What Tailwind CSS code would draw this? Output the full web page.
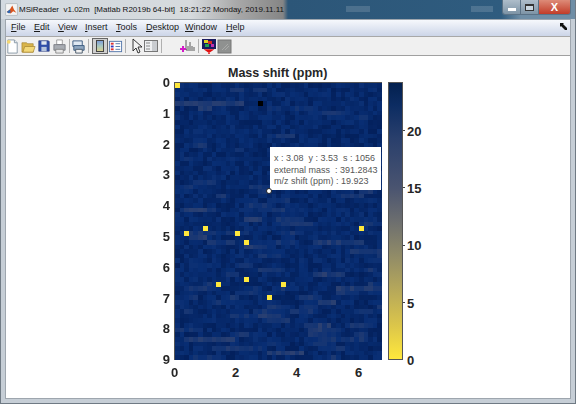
<!DOCTYPE html>
<html lang="en">
<head>
  <meta charset="UTF-8">
  <title>MSiReader</title>
  <script src="https://cdn.jsdelivr.net/npm/@tailwindcss/browser@4"></script>
</head>
<body class="w-[576px] h-[404px] overflow-hidden bg-[#c6ced6]">
  <div class="flex flex-col h-full border border-t-0 border-[#6f7a84]">
    <!-- title bar -->
    <div class="relative h-[19px] shrink-0 flex items-center bg-[linear-gradient(to_right,#d3dae1_0,#d6dadd_190px,#a9a9a9_235px,#858585_282px,#2c5678_287px,#2f5c7f_500px,#6f8ea6_520px)] font-['Liberation_Sans',sans-serif] text-[8px] text-[#111]">
      <svg class="ml-[4px] w-[13px] h-[13px]" viewBox="0 0 16 16">
        <rect x="1" y="1" width="14" height="14" fill="#f4f4f4" stroke="#9aa0a6" stroke-width=".6"/>
        <path d="M2 11l4-3 3-5 2 5 3 4-4-2-3 3z" fill="#d9541e"/>
        <path d="M2 11l4-3 1 3-2 2z" fill="#2b66b3"/>
      </svg>
      <span class="ml-[1px] whitespace-pre">MSiReader  v1.02m  [Matlab R2019b 64-bit]  18:21:22 Monday, 2019.11.11</span>
      <div class="absolute right-[4px] top-0 flex h-[15px] rounded-b-[3px] overflow-hidden border border-t-0 border-[#5b7286]">
        <div class="w-[18px] flex items-end justify-center pb-[3px] bg-[linear-gradient(to_bottom,#aebdca,#7d94a6)] border-r border-[#5b7286]"><div class="w-[8px] h-[3px] bg-white"></div></div>
        <div class="w-[18px] flex items-center justify-center bg-[linear-gradient(to_bottom,#aebdca,#7d94a6)] border-r border-[#5b7286]"><div class="w-[9px] h-[7px] border border-[#333] border-t-2 bg-[#c9d6e0]"></div></div>
        <div class="w-[31px] flex items-center justify-center bg-[linear-gradient(to_bottom,#dd8b78,#c23c28)] text-white font-bold text-[11px] leading-none">X</div>
      </div>
      <div class="absolute left-[345px] top-[6px] w-[24px] h-[6px] bg-white/15"></div>
      <div class="absolute left-[470px] top-[6px] w-[22px] h-[6px] bg-white/15"></div>
    </div>

    <!-- client area -->
    <div class="flex-1 min-h-0 mx-[4px] mb-[4px] flex flex-col border border-[#9ea6ae] bg-white">
      <!-- menu bar -->
      <div class="relative h-[17px] shrink-0 flex items-center pl-[5px] bg-[linear-gradient(to_bottom,#f6f8fc,#ccd5e8)] border-b border-[#a8a8a8] font-['Liberation_Sans',sans-serif] text-[9px] text-[#1a1a1a]">
        <span class="w-[23px]"><span class="underline">F</span>ile</span>
        <span class="w-[24px]"><span class="underline">E</span>dit</span>
        <span class="w-[27px]"><span class="underline">V</span>iew</span>
        <span class="w-[31px]"><span class="underline">I</span>nsert</span>
        <span class="w-[30px]"><span class="underline">T</span>ools</span>
        <span class="w-[39px]"><span class="underline">D</span>esktop</span>
        <span class="w-[41px]"><span class="underline">W</span>indow</span>
        <span><span class="underline">H</span>elp</span>
        <svg class="absolute right-[3px] top-[3px] w-[7px] h-[7px]" viewBox="0 0 7 7"><path d="M0 0h4l-1 1 4 4v2H5L1 3 0 4z" fill="#111"/></svg>
      </div>

      <!-- toolbar -->
      <div class="h-[19px] shrink-0 flex items-center bg-[#f0f0f0] border-b border-[#a0a0a0]">
        <svg class="ml-[-1px] w-[15px] h-[15px]" viewBox="0 0 16 16"><path d="M3 1h7l3 3v11H3z" fill="#fff" stroke="#8a9aa8"/><path d="M10 1v3h3" fill="#e8eef4" stroke="#8a9aa8"/><circle cx="4" cy="3" r="2" fill="#f5d76e"/></svg>
        <svg class="ml-[1px] w-[15px] h-[15px]" viewBox="0 0 16 16"><path d="M1 4h5l1 1h6v9H1z" fill="#d9b44a" stroke="#a08030" stroke-width=".7"/><path d="M2 14l2-6h11l-2 6z" fill="#f3d878" stroke="#a08030" stroke-width=".7"/></svg>
        <svg class="ml-[1px] w-[14px] h-[14px]" viewBox="0 0 16 16"><path d="M2 2h11l1 1v11H2z" fill="#2f4da8" stroke="#1d2f70" stroke-width=".7"/><rect x="5" y="2.500" width="6" height="4" fill="#dfe6f0"/><rect x="5" y="9" width="6" height="5" fill="#b6c4dc"/></svg>
        <svg class="ml-[1px] w-[15px] h-[15px]" viewBox="0 0 16 16"><path d="M5 1h6v5H5z" fill="#fff" stroke="#888" stroke-width=".8"/><path d="M2 6h12v6H2z" fill="#a9adb3" stroke="#6b6f75" stroke-width=".8"/><path d="M4 11h8v4H4z" fill="#e8e8e8" stroke="#777" stroke-width=".8"/></svg>
        <div class="ml-[2px] w-px h-[14px] bg-[#b0b0b0]"></div>
        <svg class="ml-[1px] w-[15px] h-[15px]" viewBox="0 0 16 16"><path d="M2 2h10v6H2z" fill="#dfe8f2" stroke="#3d5c80"/><path d="M3 7h11v5H3z" fill="#8ea6c0" stroke="#3d5c80"/><path d="M5 11h7v4H5z" fill="#f2f2f2" stroke="#4a5a6a"/></svg>
        <div class="ml-[2px] w-px h-[14px] bg-[#b0b0b0]"></div>
        <div class="ml-[3px] w-[16px] h-[16px] flex items-center justify-center bg-[#d0d0d0] border border-[#666]">
          <div class="w-[8px] h-[12px] border border-[#444] bg-[linear-gradient(to_bottom,#7f9fd8,#a8c8c0,#d8d090)]"></div>
        </div>
        <svg class="w-[15px] h-[15px]" viewBox="0 0 16 16"><rect x="1.500" y="2.500" width="13" height="11" fill="#fff" stroke="#5577aa"/><rect x="3" y="4" width="3" height="2" fill="#d33"/><rect x="3" y="7" width="3" height="2" fill="#33b"/><rect x="3" y="10" width="3" height="2" fill="#d33"/><path d="M8 5h5M8 8h5M8 11h5" stroke="#5577aa"/></svg>
        <div class="ml-[2px] w-px h-[14px] bg-[#b0b0b0]"></div>
        <svg class="ml-[3px] w-4 h-4" viewBox="0 0 16 16"><path d="M4 1v12l3-3 2 5 2-1-2-5h4z" fill="#f4f4f4" stroke="#222" stroke-width=".9"/></svg>
        <svg class="ml-[-2px] w-4 h-4" viewBox="0 0 16 16"><rect x="1.500" y="2.500" width="13" height="11" fill="#eef0f2" stroke="#777"/><rect x="9" y="3" width="5" height="10" fill="#c9ccd0"/><path d="M3 5h4M3 8h4M3 11h4" stroke="#888"/></svg>
        <div class="ml-[2px] w-px h-[14px] bg-[#b0b0b0]"></div>
        <svg class="ml-[18px] w-4 h-4" viewBox="0 0 16 16"><path d="M6 2v10h9" fill="none" stroke="#333" stroke-width=".8"/><path d="M8 11V8M10 11V4M12 11V8M14 11V9" stroke="#333" stroke-width=".8"/><path d="M0 11h6M3 8v6" stroke="#d319c8" stroke-width="2"/></svg>
        <div class="ml-[2px] w-px h-[14px] bg-[#b0b0b0]"></div>
        <svg class="ml-[2px] w-4 h-4" viewBox="0 0 16 16"><rect x="1" y="1" width="14" height="10" fill="#1b1b60"/><rect x="3" y="2" width="4" height="3" fill="#e0d020"/><rect x="7" y="3" width="4" height="3" fill="#d82a20"/><rect x="4" y="6" width="4" height="3" fill="#20a050"/><rect x="10" y="6" width="3" height="3" fill="#c030b0"/><path d="M8 16v-4M5 12h6l-3 2z" stroke="#e01010" stroke-width="1.500" fill="#e01010"/></svg>
        <svg class="w-4 h-4" viewBox="0 0 16 16"><rect x="1" y="2" width="13" height="13" fill="#8f9190" stroke="#777"/><path d="M5 12l6-6M8 12l4-4" stroke="#a9aaa9"/></svg>
      </div>

      <!-- figure -->
      <div class="relative flex-1 bg-white font-['Liberation_Sans',sans-serif] text-[#262626] font-bold text-[13px] leading-none">
        <div class="absolute left-[222px] top-[11px] text-[12.500px] whitespace-nowrap">Mass shift (ppm)</div>

        <!-- axes -->
        <div class="absolute left-[168px] top-[26px] w-[208px] h-[278px] border-t border-l border-[#555]">
          <canvas id="heatmap" width="207" height="277" class="block"></canvas>
        </div>
        <div class="absolute left-[150px] top-[26px] w-[14px] h-[278px]">
          <span class="absolute right-0 top-[-6px]">0</span>
          <span class="absolute right-0 top-[25px]">1</span>
          <span class="absolute right-0 top-[56px]">2</span>
          <span class="absolute right-0 top-[86px]">3</span>
          <span class="absolute right-0 top-[117px]">4</span>
          <span class="absolute right-0 top-[148px]">5</span>
          <span class="absolute right-0 top-[179px]">6</span>
          <span class="absolute right-0 top-[210px]">7</span>
          <span class="absolute right-0 top-[240px]">8</span>
          <span class="absolute right-0 top-[271px]">9</span>
        </div>
        <span class="absolute left-[165px] top-[310px]">0</span>
        <span class="absolute left-[226px] top-[310px]">2</span>
        <span class="absolute left-[287px] top-[310px]">4</span>
        <span class="absolute left-[349px] top-[310px]">6</span>

        <!-- datatip -->
        <div class="absolute left-[264px] top-[91px] w-[111px] h-[43px] pl-[4px] pt-[6px] bg-white text-[#555] font-normal text-[9px] leading-[11.500px]">
          <div class="whitespace-pre">x : 3.08  y : 3.53  s : 1056</div>
          <div class="whitespace-pre">external mass  : 391.2843</div>
          <div class="whitespace-pre">m/z shift (ppm) : 19.923</div>
        </div>
        <div class="absolute left-[260px] top-[132px] w-[6px] h-[6px] rounded-full bg-white border border-[#222]"></div>

        <!-- colorbar -->
        <div class="absolute left-[382px] top-[26px] w-[15px] h-[278px] border border-[#555] bg-[linear-gradient(to_bottom,#03204f,#0c2c62_8%,#293f6c_20%,#4a5470_38%,#6c6e6f_50%,#8f8a68_62%,#b6a85a_75%,#dcc64a_88%,#ffe83c)]"></div>
        <span class="absolute left-[397px] top-[74px] w-[2px] h-px bg-[#444]"></span>
        <span class="absolute left-[397px] top-[131px] w-[2px] h-px bg-[#444]"></span>
        <span class="absolute left-[397px] top-[189px] w-[2px] h-px bg-[#444]"></span>
        <span class="absolute left-[397px] top-[246px] w-[2px] h-px bg-[#444]"></span>
        <span class="absolute left-[401px] top-[69px]">20</span>
        <span class="absolute left-[401px] top-[126px]">15</span>
        <span class="absolute left-[401px] top-[183px]">10</span>
        <span class="absolute left-[401px] top-[241px]">5</span>
        <span class="absolute left-[401px] top-[298px]">0</span>
      </div>
    </div>
  </div>

  <script>
    const COLS = 45;
    const ROWS = 60;
    const yellow = [[0,0],[2,32],[6,31],[13,32],[15,34],[40,31],[15,42],[9,43],[23,43],[20,46]];
    // gray streaks picked off the reference: [row, first col, last col]
    const streaks = [[4,0,14],[5,5,7],[27,1,8],[29,15,18],[34,30,38],[35,15,19],[36,38,44],[33,3,6],[41,30,36],[52,29,33],[53,29,32],[55,3,12],[57,8,16],[58,20,27],[50,18,22],[44,35,42],[47,31,34]];

    let seed = 12345;
    function rand() {
      seed = (seed * 1103515245 + 12345) % 2147483648;
      return seed / 2147483648;
    }

    function mix(a, b, t) {
      return a.map((v, i) => Math.round(v + (b[i] - v) * t));
    }

    // noise level 0..1 mapped on the dark end of the colormap
    function shade(t) {
      const dark = [3, 32, 92];
      const blue = [8, 46, 116];
      const gray = [62, 74, 112];
      return t < 0.4 ? mix(dark, blue, t / 0.4) : mix(blue, gray, (t - 0.4) / 0.6);
    }

    const grid = [];
    for (let r = 0; r < ROWS; r++) {
      const row = [];
      const grayChance = 0.03 + 0.12 * (r / ROWS);
      let run = 0;
      for (let c = 0; c < COLS; c++) {
        if (run === 0 && rand() < grayChance / 3) run = 2 + Math.floor(rand() * 5);
        if (run > 0) {
          row.push(0.4 + rand() * 0.25);
          run--;
        } else {
          row.push(rand() * 0.45);
        }
      }
      grid.push(row);
    }
    streaks.forEach(([r, a, b]) => {
      for (let c = a; c <= b; c++) grid[r][c] = 0.5 + rand() * 0.3;
    });

    const ctx = document.getElementById('heatmap').getContext('2d');
    const cw = 207 / COLS;
    const ch = 277 / ROWS;

    // cells snap to whole pixels so no seams show between them
    function cell(c, r) {
      const x = Math.round(c * cw);
      const y = Math.round(r * ch);
      ctx.fillRect(x, y, Math.round((c + 1) * cw) - x, Math.round((r + 1) * ch) - y);
    }

    // markers keep one size, wherever the rounding would fall
    function marker(c, r) {
      ctx.fillRect(Math.round(c * cw), Math.round(r * ch), 5, 5);
    }

    for (let r = 0; r < ROWS; r++) {
      for (let c = 0; c < COLS; c++) {
        ctx.fillStyle = `rgb(${shade(grid[r][c]).join(',')})`;
        cell(c, r);
      }
    }
    ctx.fillStyle = '#ffe83c';
    yellow.forEach(([c, r]) => marker(c, r));
    ctx.fillStyle = '#000';
    marker(18, 4);
  </script>
</body>
</html>
